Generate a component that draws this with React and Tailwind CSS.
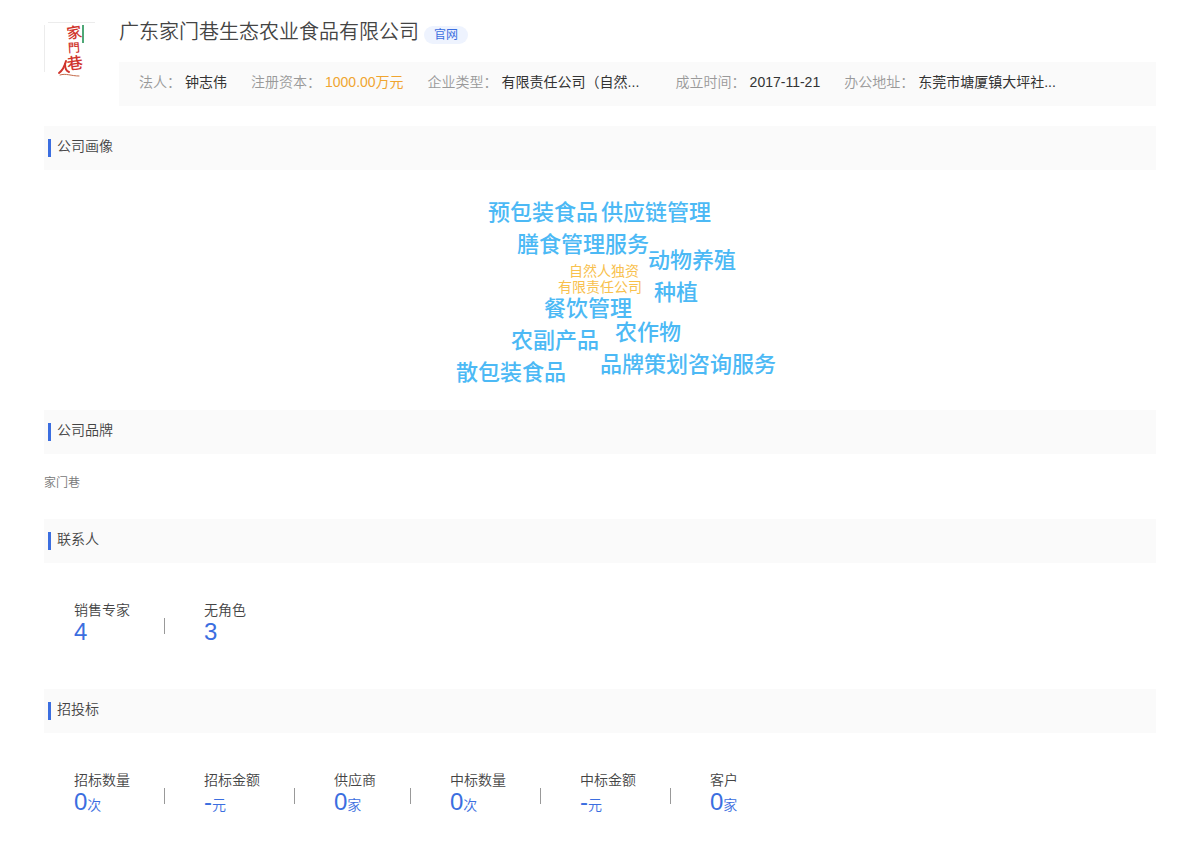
import React from "react";

const companyInfo = [
    { label: "法人：", value: "钟志伟" },
    { label: "注册资本：", value: "1000.00万元", highlight: true },
    { label: "企业类型：", value: "有限责任公司（自然...", long: true },
    { label: "成立时间：", value: "2017-11-21" },
    { label: "办公地址：", value: "东莞市塘厦镇大坪社...", long: true },
];

// Word positions on the cloud canvas
const words = [
    { text: "预包装食品", x: 68, y: 27 },
    { text: "供应链管理", x: 181, y: 27 },
    { text: "膳食管理服务", x: 97, y: 59 },
    { text: "动物养殖", x: 228, y: 75 },
    { text: "自然人独资", x: 149, y: 91, small: true },
    { text: "有限责任公司", x: 138, y: 107, small: true },
    { text: "种植", x: 234, y: 107 },
    { text: "餐饮管理", x: 124, y: 123 },
    { text: "农副产品", x: 91, y: 155 },
    { text: "农作物", x: 195, y: 147 },
    { text: "散包装食品", x: 36, y: 187 },
    { text: "品牌策划咨询服务", x: 180, y: 179 },
];

const contacts = [
    { label: "销售专家", value: "4" },
    { label: "无角色", value: "3" },
];

const bids = [
    { label: "招标数量", value: "0", unit: "次" },
    { label: "招标金额", value: "-", unit: "元" },
    { label: "供应商", value: "0", unit: "家" },
    { label: "中标数量", value: "0", unit: "次" },
    { label: "中标金额", value: "-", unit: "元" },
    { label: "客户", value: "0", unit: "家" },
];

const Logo = () => (
    <svg
        viewBox="0 0 55 60"
        className="w-[55px] h-[60px] shrink-0 overflow-visible"
        role="img"
        aria-label="家门巷"
    >
        <path d="M4 .5H51M.5 3V50" stroke="#ececec" fill="none" />
        <g fill="#d0342c" fontFamily="'Noto Sans CJK TC', sans-serif" fontWeight="500" textAnchor="middle">
            <text x="30" y="16" fontSize="15" transform="rotate(-10 30 10)">家</text>
            <text x="30" y="30" fontSize="12" transform="rotate(-4 30 26)">門</text>
            <text x="31" y="47" fontSize="16" transform="rotate(-8 31 42)">巷</text>
        </g>
        <g stroke="#d0342c" fill="none" strokeLinecap="round">
            <path d="M22 39C21 43 19 48 15 51" strokeWidth="2" />
            <path d="M21 42C21 46 22 49 25 50" strokeWidth="2" />
            <path d="M16 53C22 51 27 54 35 54" strokeWidth="1" stroke="#c46a4a" />
        </g>
        <path d="M39 3V21" stroke="#4fa877" strokeWidth="2" />
    </svg>
);

const SectionTitle = ({ children }) => (
    <div className="h-11 bg-[#fafafa] flex items-center pl-1">
        <span className="w-[3px] h-[18px] bg-[#3b6ee0]"></span>
        <h2 className="pl-1.5 pb-1 text-sm font-[350] text-[#444]">{children}</h2>
    </div>
);

const Stats = ({ items }) => (
    <div className="flex px-[30px] pt-9 pb-[42px]">
        {items.map((item, index) => (
            <div key={item.label} className="flex items-center">
                {index > 0 && <span className="w-px h-4 bg-[#999] ml-[34px] mr-[39px] mt-1.5"></span>}
                <div>
                    <div className="text-sm leading-[22px] font-[350] text-[#444]">{item.label}</div>
                    <div className="text-2xl leading-[22px] h-[26px] font-[350] text-[#3b6ee0]">
                        {item.value}
                        {item.unit && <span className="text-sm leading-[22px]">{item.unit}</span>}
                    </div>
                </div>
            </div>
        ))}
    </div>
);

const App = () => {
    return (
        <main className="bg-white px-11 pt-[22px] font-['Liberation_Sans','Noto_Sans_CJK_SC',sans-serif]">
            <header className="flex gap-5">
                <Logo />
                <div className="flex-1 min-w-0">
                    <div className="flex items-center gap-[5px] h-5">
                        <h1 className="text-xl font-[350] text-[#444]">广东家门巷生态农业食品有限公司</h1>
                        <a
                            href="#"
                            className="mt-1.5 h-[18px] px-2.5 rounded-full bg-[#eef3fe] text-xs leading-[18px] text-[#3b6ee0]"
                        >
                            官网
                        </a>
                    </div>
                    <dl className="mt-5 h-11 px-5 pb-1 flex items-center gap-6 bg-[#fafafa] text-sm">
                        {companyInfo.map((item) => (
                            <div key={item.label} className="flex gap-1 whitespace-nowrap">
                                <dt className="font-[350] text-[#999]">{item.label}</dt>
                                <dd
                                    className={
                                        item.highlight
                                            ? "text-[#f0a530]"
                                            : item.long
                                              ? "w-[150px] text-[#333]"
                                              : "text-[#333]"
                                    }
                                >
                                    {item.value}
                                </dd>
                            </div>
                        ))}
                    </dl>
                </div>
            </header>

            <section className="mt-5">
                <SectionTitle>公司画像</SectionTitle>
                <div className="relative w-[360px] h-60 mx-auto">
                    {words.map((word) => (
                        <span
                            key={word.text}
                            className={
                                word.small
                                    ? "absolute whitespace-nowrap text-sm leading-[20px] text-[#f8c14e]"
                                    : "absolute whitespace-nowrap text-[22px] leading-[32px] font-medium text-[#4cb9f5]"
                            }
                            style={{ left: word.x, top: word.y }}
                        >
                            {word.text}
                        </span>
                    ))}
                </div>
            </section>

            <section>
                <SectionTitle>公司品牌</SectionTitle>
                <p className="pt-[21px] pb-7 text-xs font-[350] text-[#777]">家门巷</p>
            </section>

            <section>
                <SectionTitle>联系人</SectionTitle>
                <Stats items={contacts} />
            </section>

            <section>
                <SectionTitle>招投标</SectionTitle>
                <Stats items={bids} />
            </section>
        </main>
    );
};

export default App;
